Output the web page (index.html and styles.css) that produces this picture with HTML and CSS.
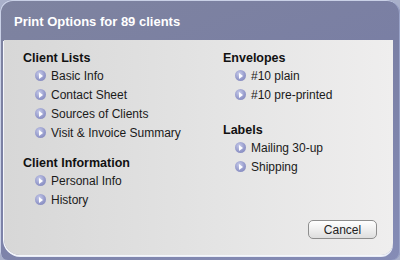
FILE: index.html
```html
<!DOCTYPE html>
<html lang="en">
<head>
    <meta charset="UTF-8">
    <title>Print Options</title>
    <link rel="stylesheet" href="styles.css">
</head>
<body>

<div class="dialog">
    <!-- Title bar -->
    <div class="dialog-title">Print Options for 89 clients</div>

    <!-- Body -->
    <div class="panel">
        <div class="columns">
            <div class="col col-left">
                <div class="group">
                    <div class="group-title">Client Lists</div>
                    <a class="option" href="#"><span class="bullet"></span>Basic Info</a>
                    <a class="option" href="#"><span class="bullet"></span>Contact Sheet</a>
                    <a class="option" href="#"><span class="bullet"></span>Sources of Clients</a>
                    <a class="option" href="#"><span class="bullet"></span>Visit &amp; Invoice Summary</a>
                </div>
                <div class="group">
                    <div class="group-title">Client Information</div>
                    <a class="option" href="#"><span class="bullet"></span>Personal Info</a>
                    <a class="option" href="#"><span class="bullet"></span>History</a>
                </div>
            </div>
            <div class="col col-right">
                <div class="group">
                    <div class="group-title">Envelopes</div>
                    <a class="option" href="#"><span class="bullet"></span>#10 plain</a>
                    <a class="option" href="#"><span class="bullet"></span>#10 pre-printed</a>
                </div>
                <div class="group">
                    <div class="group-title">Labels</div>
                    <a class="option" href="#"><span class="bullet"></span>Mailing 30-up</a>
                    <a class="option" href="#"><span class="bullet"></span>Shipping</a>
                </div>
            </div>
        </div>
        <div class="dialog-footer">
            <button class="cancel-btn">Cancel</button>
        </div>
    </div>
</div>

</body>
</html>
```

FILE: styles.css
```css
* {
    margin: 0;
    padding: 0;
    box-sizing: border-box;
}

body {
    background-color: #a9b0ca;
    font-family: 'Liberation Sans', Arial, sans-serif;
    font-size: 12px;
    color: #111;
    width: 400px;
    height: 260px;
    overflow: hidden;
}

.dialog {
    width: 400px;
    height: 260px;
    border-radius: 12px 14px 8px 8px;
    background: linear-gradient(160deg, #7e839f 0%, #7a7fa4 45%, #858cb6 100%);
    box-shadow: inset 1px 1px 0 #c9d0e6, inset -1px 0 0 #9aa3c8;
    display: flex;
    flex-direction: column;
}

/* Title bar */
.dialog-title {
    height: 40px;
    line-height: 43px;
    padding-left: 14px;
    color: #fff;
    font-weight: bold;
    font-size: 13px;
}

.panel {
    flex: 1;
    margin: 0 7px 5px 4px;
    border-radius: 0 0 12px 16px;
    background: linear-gradient(90deg, #d7d7d7 0%, #e4e4e4 55%, #efeeee 100%);
    box-shadow: -1px 1px 0 #f4f6fb, 0 2px 0 #e8ecf6;
    display: flex;
    flex-direction: column;
    padding: 9px 16px 16px 19px;
}

.columns {
    display: flex;
}

.col {
    display: flex;
    flex-direction: column;
}

.col-left {
    width: 200px;
    gap: 12px;
}

.col-right {
    gap: 17px;
}

.group {
    display: flex;
    flex-direction: column;
}

.group-title {
    font-weight: bold;
    font-size: 12.5px;
    line-height: 18px;
    color: #111;
}

.group-title + .option {
    margin-top: -1px;
}

.option {
    display: flex;
    align-items: center;
    height: 19px;
    padding-left: 12px;
    color: #1a1a1a;
    text-decoration: none;
}

.bullet {
    width: 11px;
    height: 11px;
    margin-right: 5px;
    border-radius: 50%;
    background: radial-gradient(circle at 40% 35%, #c7cbea 0%, #959acb 55%, #7c81b7 100%);
    position: relative;
}

.bullet::after {
    content: "";
    position: absolute;
    left: 4px;
    top: 2.5px;
    border-left: 4px solid #fff;
    border-top: 3px solid transparent;
    border-bottom: 3px solid transparent;
}

.dialog-footer {
    margin-top: auto;
    display: flex;
    justify-content: flex-end;
}

.cancel-btn {
    width: 69px;
    height: 19px;
    border: 1px solid #8e8e8e;
    border-radius: 5px;
    background: linear-gradient(#ffffff, #efefef 50%, #dedede);
    font-family: 'Liberation Sans', Arial, sans-serif;
    font-size: 12px;
    color: #222;
    cursor: pointer;
}
```
